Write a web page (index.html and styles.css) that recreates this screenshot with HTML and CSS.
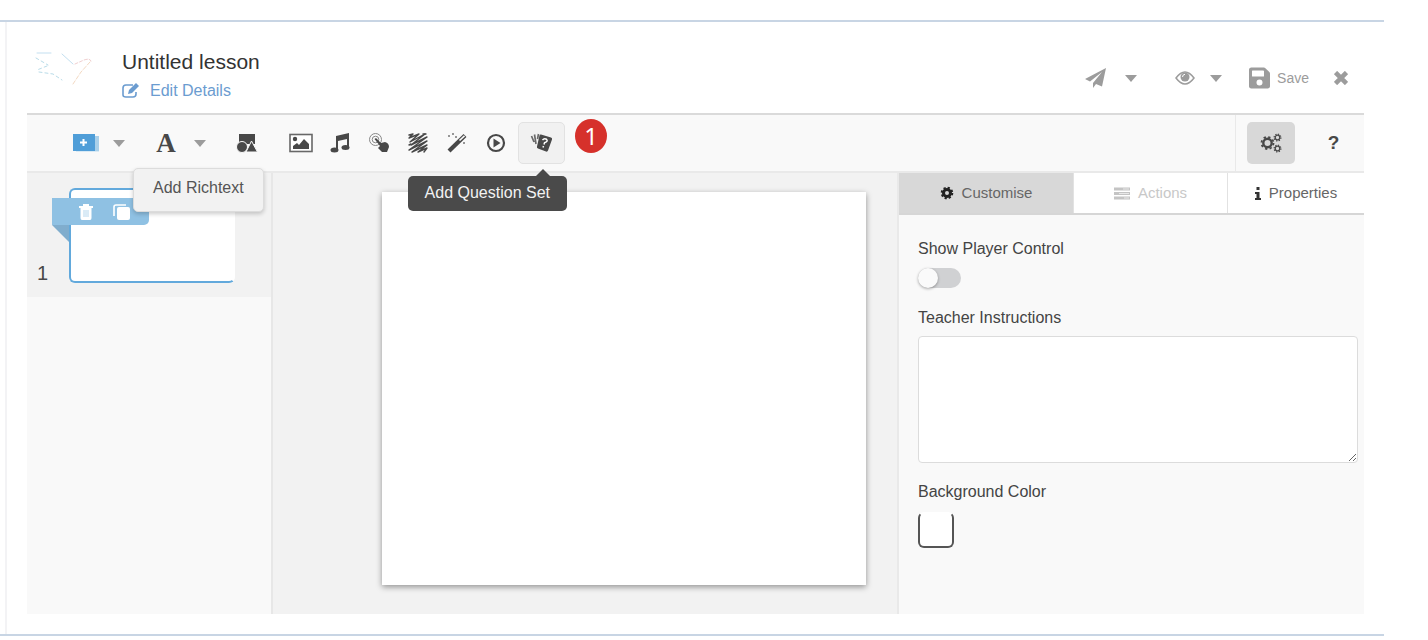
FILE: index.html
```html
<!DOCTYPE html>
<html lang="en">
<head>
<meta charset="utf-8">
<title>Untitled lesson</title>
<link rel="stylesheet" href="styles.css">
</head>
<body>
<div class="frame">
<div class="frame-inner">
<header class="header">
  <svg class="logo" viewBox="0 0 60 50" fill="none" stroke-linecap="round">
    <path stroke="#c3dff0" d="M3 3H17M28 4L39 14"/>
    <path stroke="#b9dce9" stroke-dasharray="3 3" d="M2 8L14 15M13 16L3 20M5 22L19 24L28 30"/>
    <path stroke="#f0cfd0" stroke-dasharray="3 2" d="M41 14L50 10Q56 8 57 11"/>
    <path stroke="#f3d9c2" stroke-dasharray="4 2" d="M56 12L47 22L39 34"/>
  </svg>
  <div class="heading">
    <h1 class="title">Untitled lesson</h1>
    <a class="edit-link" href="#"><svg width="18" height="16" viewBox="0 0 18 16" fill="none" stroke="currentColor" stroke-width="1.600"><path d="M11 2H4Q1 2 1 5V12Q1 14 4 14H11Q14 14 14 11V9"/><path d="M6 11L7 7L14 0L17 3L10 10Z" fill="currentColor" stroke="none"/></svg>Edit Details</a>
  </div>
  <div class="header-actions">
    <button class="ghost send" aria-label="Publish"><svg width="22" height="20" viewBox="0 0 22 20" fill="currentColor"><path d="M21 0L0 11L5 13.500L17 4L8 15V20L11 16L17 18.500Z"/></svg><i class="caret"></i></button>
    <button class="ghost view" aria-label="Preview"><svg width="20" height="14" viewBox="0 0 20 14"><path d="M1 7Q10-5 19 7Q10 19 1 7Z" fill="none" stroke="currentColor" stroke-width="1.500"/><circle cx="10" cy="6" r="4.500" fill="currentColor"/><path d="M7.500 6Q7.500 3.500 10 3.300" fill="none" stroke="#fff"/></svg><i class="caret"></i></button>
    <button class="ghost save"><svg width="21" height="24" viewBox="0 0 448 512" fill="currentColor"><path d="M434 130l-84-84A48 48 0 0 0 316 32H48C21 32 0 53 0 80v352c0 27 21 48 48 48h352c27 0 48-21 48-48V164a48 48 0 0 0-14-34zM224 416a64 64 0 1 1 0-128a64 64 0 0 1 0 128zm96-304V212q0 12-12 12H76q-12 0-12-12V108q0-12 12-12H304q5 0 9 4q7 5 7 12z"/></svg>Save</button>
    <button class="ghost close" aria-label="Close"><svg width="14" height="14" viewBox="0 0 14 14" stroke="currentColor" stroke-width="4.600"><path d="M1.500 1.500L12.500 12.500M12.500 1.500L1.500 12.500"/></svg></button>
  </div>
</header>

<nav class="toolbar" aria-label="Insert">
  <button class="tool add-slide" aria-label="Add slide"><svg width="28" height="20" viewBox="0 0 28 20"><path d="M4 4H27V19H4Z" fill="#d9eaf5"/><path d="M23 3H27V18H23Z" fill="#a9d0ea"/><rect x="1" y="1" width="22" height="17" fill="#509ed8"/><path d="M11.500 6V13M8 9.500H15" stroke="#fff" stroke-width="2"/></svg><i class="caret"></i></button>
  <div class="tool-wrap">
    <button class="tool add-text" aria-label="Add Richtext"><span class="letter">A</span><i class="caret"></i></button>
    <div class="tip-light" role="tooltip">Add Richtext</div>
  </div>
  <button class="tool shapes" aria-label="Add shape"><svg width="22" height="20" viewBox="0 0 22 20" fill="#484848"><path d="M3 1H19V11H3Z"/><circle cx="6" cy="14" r="5.500" stroke="#f9f9f9"/><path d="M15.500 8L21.500 19H10Z" stroke="#f9f9f9"/></svg></button>
  <button class="tool" aria-label="Add image"><svg width="24" height="20" viewBox="0 0 24 20"><rect x="1" y="1.500" width="22" height="17" fill="#fff" stroke="#686868" stroke-width="1.600"/><circle cx="6" cy="6" r="2.200" fill="#484848"/><path d="M4 16V13L8 10L10 12L15 6L20 11V16Z" fill="#484848"/></svg></button>
  <button class="tool" aria-label="Add audio"><svg width="20" height="20" viewBox="0 0 20 20" fill="#484848"><path d="M6 3L19 0V15H17V6L8 8V17H6Z"/><ellipse cx="4.500" cy="17" rx="4" ry="2.500"/><ellipse cx="15.500" cy="14.500" rx="4" ry="2.500"/></svg></button>
  <button class="tool" aria-label="Add hotspot"><svg width="22" height="20" viewBox="0 0 22 20"><circle cx="7.500" cy="6.500" r="6" fill="none" stroke="#888"/><circle cx="7.500" cy="6.500" r="3.300" fill="none" stroke="#888"/><path d="M6.500 6Q8 4.500 9.500 6.500L13 10L17 9Q21 10 21 14L19 19H14L10 15L12 13Z" fill="#484848"/></svg></button>
  <button class="tool" aria-label="Add scratch area"><svg width="22" height="20" viewBox="0 0 22 20" fill="none" stroke="#484848" stroke-linecap="round" stroke-linejoin="round" stroke-width="1.400"><path d="M2 2L6 1L2 5L12 1L3 9L18 1L4 12L20 4L2 17L20 8L5 19L20 12L11 19L20 15L17 19"/><path d="M16 1H19M2 12L4 11"/></svg></button>
  <button class="tool" aria-label="Add effect"><svg width="22" height="20" viewBox="0 0 22 20"><path d="M3 18L19 2.500" stroke="#484848" stroke-width="4.200"/><path d="M13.500 7.500L18.500 2.800" stroke="#f9f9f9" stroke-width="1.600"/><path d="M3 2V4M2 3H4M7 0V2M6 1H8M10 3V5M9 4H11M18 9V11M17 10H19" stroke="#777"/></svg></button>
  <button class="tool" aria-label="Add video"><svg width="20" height="20" viewBox="0 0 20 20"><circle cx="10" cy="10" r="8" fill="none" stroke="#484848" stroke-width="2.200"/><path d="M7.500 5.500L14.500 10L7.500 14.500Z" fill="#484848"/></svg></button>
  <div class="tool-wrap question">
    <button class="tool tool-active" aria-label="Add Question Set"><svg width="24" height="20" viewBox="0 0 24 20"><path d="M1.500 3L4 9M4.500 1.500L6 11M8.500 1L7.500 6" fill="none" stroke="#6a6a6a" stroke-width="1.700"/><path d="M11 1.500L21 4.500Q22.500 5 22 6.500L18 17.500Q17.500 19 16 18.500L8 15.500Q6.500 15 7 13.500L9.500 2.500Q10 1 11 1.500Z" fill="#484848"/><path d="M12.500 7.200Q14 5 16.500 6.200Q18.500 8.200 14.500 9.800L14 11.500M13.500 13L13 14.500" fill="none" stroke="#fff" stroke-width="1.500"/></svg></button>
    <div class="tip-dark" role="tooltip">Add Question Set</div>
  </div>
  <span class="step">1</span>
  <div class="toolbar-end">
    <button class="tool settings" aria-label="Settings"><svg width="22" height="20" viewBox="0 0 22 20" fill="none" stroke="#484848"><circle cx="7.500" cy="10" r="4.200" stroke-width="2.400"/><circle cx="7.500" cy="10" r="6" stroke-width="1.800" stroke-dasharray="2.300 2.412"/><circle cx="17.500" cy="4.500" r="2.300" stroke-width="1.300"/><circle cx="17.500" cy="4.500" r="3.400" stroke-width="1.200" stroke-dasharray="1.300 1.370"/><circle cx="17.500" cy="15.500" r="2.300" stroke-width="1.300"/><circle cx="17.500" cy="15.500" r="3.400" stroke-width="1.200" stroke-dasharray="1.300 1.370"/></svg></button>
    <button class="tool help" aria-label="Help">?</button>
  </div>
</nav>

<main class="workspace">
  <aside class="slides">
    <div class="slide-row">
      <span class="slide-number">1</span>
      <div class="thumb">
        <div class="ribbon">
          <button class="mini" aria-label="Delete slide"><svg width="14" height="16" viewBox="0 0 14 16"><path d="M5 2V1H9V2M0 3H14" stroke="#fff" stroke-width="2" fill="none"/><path d="M1.500 4H12.500V14Q12.500 16 11 16H3Q1.500 16 1.500 14Z" fill="#fff"/><path d="M5 6V13M7 6V13M9 6V13" stroke="#b6d7ed"/></svg></button>
          <button class="mini" aria-label="Duplicate slide"><svg width="18" height="16" viewBox="0 0 18 16"><path d="M13 1H3Q1 1 1 3V12" stroke="#fff" stroke-width="1.600" fill="none"/><rect x="4" y="3" width="13" height="13" rx="2" fill="#fff"/></svg></button>
        </div>
      </div>
    </div>
  </aside>
  <section class="stage"><div class="canvas"></div></section>
  <aside class="panel">
    <div class="tabs" role="tablist">
      <button class="tab tab-on" role="tab" aria-selected="true"><svg width="14" height="14" viewBox="0 0 14 14" fill="none" stroke="#222"><circle cx="7" cy="7" r="3.500" stroke-width="3"/><circle cx="7" cy="7" r="5.300" stroke-width="2" stroke-dasharray="2.200 1.963"/></svg>Customise</button>
      <button class="tab tab-off" role="tab" disabled><svg width="16" height="13" viewBox="0 0 16 13" stroke="#c4c4c4"><path d="M0 2H16M0 6.500H16M0 11H16" stroke-width="3"/><path d="M9 2H15M5 6.500H15M10 11H15" stroke="#e8e8e8"/></svg>Actions</button>
      <button class="tab" role="tab"><svg class="info" width="6" height="13" viewBox="0 0 6 13" fill="#333"><path d="M1.500 0H4.500V3H1.500ZM0 5H4.500V11H6V13H0V11H1.500V7H0Z"/></svg>Properties</button>
    </div>
    <form class="form">
      <label class="label" for="player">Show Player Control</label>
      <input class="switch" type="checkbox" id="player">
      <label class="label" for="notes">Teacher Instructions</label>
      <textarea class="notes" id="notes"></textarea>
      <label class="label" for="swatch">Background Color</label>
      <button class="swatch" type="button" id="swatch"></button>
    </form>
  </aside>
</main>
</div>
</div>
</body>
</html>
```
FILE: styles.css
```css
* { box-sizing: border-box; }
body {
  margin: 0;
  background: #fff;
  color: #484848;
  font: 16px/20px "Liberation Sans", Arial, sans-serif;
}
button { margin: 0; padding: 0; border: 0; background: none; color: inherit; font: inherit; }
svg { display: block; flex: none; }

.frame {
  margin: 20px 44px 0 0;
  padding-left: 5px;
  border-top: 2px solid #c8d5e4;
  border-bottom: 2px solid #c8d5e4;
}
.frame-inner { padding: 0 20px 20px; border-left: 2px solid #f3f3f5; }

.header {
  display: flex;
  align-items: flex-start;
  height: 93px;
  border-bottom: 2px solid #dadada;
}
.logo { width: 60px; height: 50px; margin: 28px 0 0 7px; }
.heading { margin: 26px 0 0 28px; }
.title { margin: 0; font-size: 21px; line-height: 28px; font-weight: 400; color: #333; }
.edit-link {
  display: flex;
  align-items: center;
  gap: 10px;
  height: 30px;
  color: #6b9cd0;
  text-decoration: none;
}
.header-actions { display: flex; align-items: center; margin: 42px 16px 0 auto; height: 28px; color: #9c9c9c; }
.ghost { display: flex; align-items: center; }
.send { gap: 18px; margin-right: 38px; }
.view { gap: 15px; margin-right: 27px; }
.save { gap: 7px; margin-right: 25px; font-size: 14px; }
.caret {
  width: 0;
  height: 0;
  border: 6px solid transparent;
  border-top: 7px solid #9c9c9c;
  border-bottom: 0;
}

.toolbar {
  display: flex;
  align-items: center;
  height: 58px;
  padding-left: 45px;
  background: #f9f9f9;
  border-bottom: 2px solid #e9e9e9;
}
.tool { display: flex; align-items: center; justify-content: center; width: 39px; height: 42px; }
.tool-wrap { position: relative; }
.add-slide { width: 53px; gap: 13px; }
.add-text { width: 50px; gap: 18px; }
.tool-wrap:has(.add-text) { margin-left: 31px; }
.letter { font: bold 27px/28px "Liberation Serif", serif; }
.shapes { margin: 0 15px 0 21px; }
.question { margin-left: 3px; }
.tool-active { width: 47px; background: #f1f1f1; border: 1px solid #e2e2e2; border-radius: 5px; }
.tip-light {
  position: absolute;
  z-index: 3;
  top: 46px;
  left: -23px;
  padding: 9px 19px 13px;
  background: #f2f2f2;
  border: 1px solid #dcdcdc;
  border-radius: 5px;
  box-shadow: 0 2px 4px #0003;
  color: #555;
  white-space: nowrap;
}
.tip-dark {
  position: absolute;
  z-index: 3;
  top: 54px;
  right: -2px;
  padding: 7px 17px 8px;
  border-radius: 5px;
  background: #4a4a4a;
  color: #f2f2f2;
  white-space: nowrap;
}
.tip-dark::before {
  content: "";
  position: absolute;
  right: 17px;
  bottom: 100%;
  border: 7px solid transparent;
  border-bottom-color: #4a4a4a;
  border-top: 0;
}
.step {
  width: 32px;
  height: 34px;
  margin: 0 0 14px 10px;
  border-radius: 50%;
  background: #d6312b;
  color: #fff;
  font: 24px/34px "Noto Sans", sans-serif;
  text-align: center;
}
.toolbar-end {
  display: flex;
  align-items: center;
  gap: 19px;
  align-self: stretch;
  margin-left: auto;
  padding: 0 11px;
  border-left: 1px solid #e9e9e9;
}
.settings { width: 48px; background: #d8d8d8; border-radius: 5px; }
.help { font-size: 19px; font-weight: 700; }

.workspace { display: flex; }
.slides { flex: 0 0 246px; background: #f9f9f9; border-right: 2px solid #e7e7e7; }
.slide-row { display: flex; align-items: flex-end; height: 124px; padding: 0 36px 14px 10px; background: #f2f2f2; }
.slide-number { width: 32px; font-size: 20px; }
.thumb {
  position: relative;
  flex: 1;
  height: 95px;
  background: #fff;
  border: 2px solid #62a9dc;
  border-right-color: #fff;
  border-radius: 6px;
}
.ribbon {
  position: absolute;
  top: 8px;
  left: -19px;
  display: flex;
  align-items: center;
  gap: 20px;
  width: 97px;
  height: 27px;
  padding-left: 27px;
  background: #8fc1e3;
  border-bottom-right-radius: 5px;
}
.ribbon::after {
  content: "";
  position: absolute;
  top: 100%;
  left: 0;
  border-top: 17px solid #80adcd;
  border-left: 17px solid transparent;
}

.stage { flex: 1; min-width: 0; padding: 19px 31px 29px 109px; background: #f2f2f2; }
.canvas { aspect-ratio: 484 / 393; background: #fff; box-shadow: 0 2px 6px #0006; }

.panel { flex: 0 0 467px; background: #f9f9f9; border-left: 2px solid #e9e9e9; }
.tabs { display: grid; grid-template-columns: 174px 154px 1fr; height: 42px; border-bottom: 2px solid #d6d6d6; }
.tab {
  display: flex;
  align-items: center;
  justify-content: center;
  gap: 8px;
  background: #fff;
  color: #666;
  font-size: 15px;
}
.tab + .tab { border-left: 1px solid #e2e2e2; }
.tab-on { background: #d8d8d8; }
.tab-off { color: #c8c8c8; }
.form { display: flex; flex-direction: column; align-items: flex-start; padding: 24px 6px 0 19px; }
.label { color: #444; }
.switch {
  appearance: none;
  width: 43px;
  height: 20px;
  margin: 9px 0 20px;
  border-radius: 10px;
  background: #d0d1d3;
}
.switch::before {
  content: "";
  display: block;
  width: 20px;
  height: 20px;
  border-radius: 50%;
  background: #fafafa;
  box-shadow: 0 1px 3px #0005;
}
.notes {
  width: 100%;
  height: 127px;
  margin: 8px 0 19px;
  border: 1px solid #dcdcdc;
  border-radius: 4px;
  background: #fff;
}
.swatch {
  width: 36px;
  height: 36px;
  margin-top: 10px;
  border: 2px solid #555;
  border-top-color: #fff;
  border-radius: 6px;
  background: #fff;
}
```
